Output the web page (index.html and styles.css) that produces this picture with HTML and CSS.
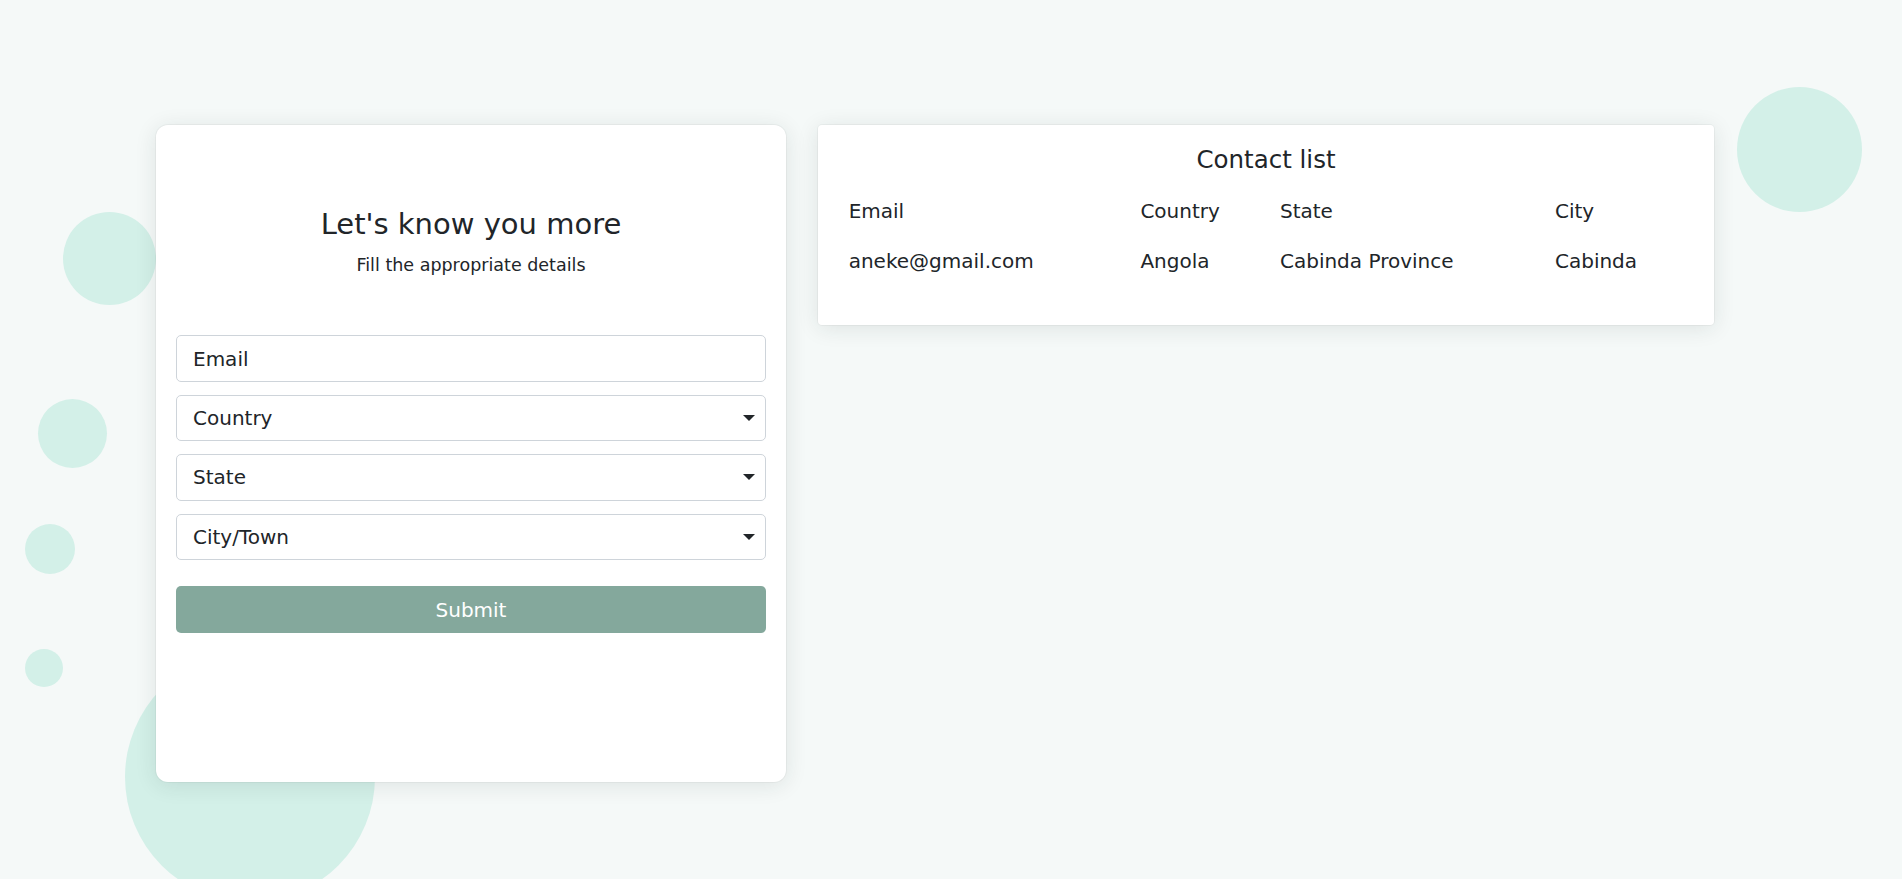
FILE: index.html
```html
<!DOCTYPE html>
<html lang="en">
<head>
<meta charset="utf-8">
<title>Contact form</title>
<link rel="stylesheet" href="styles.css">
</head>
<body>
<div class="bubbles" aria-hidden="true">
  <span class="bubble b1"></span>
  <span class="bubble b2"></span>
  <span class="bubble b3"></span>
  <span class="bubble b4"></span>
  <span class="bubble b5"></span>
  <span class="bubble b6"></span>
</div>
<main class="page">
  <section class="card form-card">
    <h2 class="form-title">Let's know you more</h2>
    <p class="form-sub">Fill the appropriate details</p>
    <form class="form">
      <input class="field" type="email" placeholder="Email">
      <div class="select-wrap">
        <select class="field select"><option>Country</option></select>
      </div>
      <div class="select-wrap">
        <select class="field select"><option>State</option></select>
      </div>
      <div class="select-wrap">
        <select class="field select"><option>City/Town</option></select>
      </div>
      <button class="submit" type="button">Submit</button>
    </form>
  </section>
  <section class="card list-card">
    <h3 class="list-title">Contact list</h3>
    <table class="table">
      <colgroup>
        <col class="c-email"><col class="c-country"><col class="c-state"><col class="c-city">
      </colgroup>
      <thead>
        <tr><th>Email</th><th>Country</th><th>State</th><th>City</th></tr>
      </thead>
      <tbody>
        <tr><td>aneke@gmail.com</td><td>Angola</td><td>Cabinda Province</td><td>Cabinda</td></tr>
      </tbody>
    </table>
  </section>
</main>
</body>
</html>
```

FILE: styles.css
```css
html, body {
  margin: 0;
  height: 879px;
  overflow: hidden;
}
body {
  background: #f5f9f8;
  font-family: "DejaVu Sans", "Open Sans", sans-serif;
  color: #212529;
  position: relative;
}

.bubbles {
  position: absolute;
  inset: 0;
  z-index: 0;
}
.bubble {
  position: absolute;
  display: block;
  border-radius: 50%;
  background: #d3f0e8;
}
.b1 { left: 63px; top: 212px; width: 93px; height: 93px; }
.b2 { left: 38px; top: 399px; width: 69px; height: 69px; }
.b3 { left: 25px; top: 524px; width: 50px; height: 50px; }
.b4 { left: 25px; top: 649px; width: 38px; height: 38px; }
.b5 { left: 125px; top: 652px; width: 250px; height: 250px; }
.b6 { left: 1737px; top: 87px; width: 125px; height: 125px; }

.page {
  position: relative;
  z-index: 1;
  display: flex;
  align-items: flex-start;
  gap: 32px;
  padding: 125px 0 0 156px;
}

.card {
  background: #fff;
  box-shadow: 0 3px 22px rgba(30, 50, 45, 0.11), 0 0 0 1px rgba(0, 0, 0, 0.035);
  box-sizing: border-box;
}

.form-card {
  width: 630px;
  height: 657px;
  border-radius: 12px;
  padding: 20px;
}
.form-title {
  margin: 61.6px 0 0;
  font-size: 29px;
  line-height: 34.8px;
  font-weight: 400;
  text-align: center;
}
.form-sub {
  margin: 10.4px 0 0;
  font-size: 17.5px;
  line-height: 26.25px;
  text-align: center;
}
.form {
  margin-top: 57.3px;
  display: flex;
  flex-direction: column;
  gap: 13px;
}
.field {
  box-sizing: border-box;
  width: 100%;
  height: 46.4px;
  margin: 0;
  padding: 0 16px;
  border: 1px solid #ced4da;
  border-radius: 5px;
  background: #fff;
  font-family: inherit;
  font-size: 20px;
  color: #212529;
  outline: none;
}
.field::placeholder {
  color: #212529;
  opacity: 1;
}
.select {
  appearance: none;
  -webkit-appearance: none;
  padding-right: 40px;
}
.select-wrap {
  position: relative;
}
.select-wrap::after {
  content: "";
  position: absolute;
  right: 11px;
  top: 50%;
  margin-top: -3px;
  width: 0;
  height: 0;
  border-left: 6.5px solid transparent;
  border-right: 6.5px solid transparent;
  border-top: 6.5px solid #212529;
  pointer-events: none;
}
.submit {
  margin-top: 13.5px;
  height: 46.4px;
  border: 0;
  border-radius: 5px;
  background: #84a89c;
  color: #fff;
  font-family: inherit;
  font-size: 20px;
  cursor: pointer;
}

.list-card {
  width: 896px;
  height: 200px;
  border-radius: 4px;
  padding: 20.4px 22.7px 0;
}
.list-title {
  margin: 0;
  font-size: 24.5px;
  line-height: 29.4px;
  font-weight: 400;
  text-align: center;
}
.table {
  margin-top: 11.2px;
  width: 100%;
  border-collapse: collapse;
  table-layout: fixed;
  font-size: 20px;
  line-height: 30px;
}
.c-email { width: 291.7px; }
.c-country { width: 139.6px; }
.c-state { width: 275px; }
.table th,
.table td {
  padding: 9.65px 8px;
  text-align: left;
  font-weight: 400;
  white-space: nowrap;
}
.table th {
  padding-bottom: 10.65px;
}
```
